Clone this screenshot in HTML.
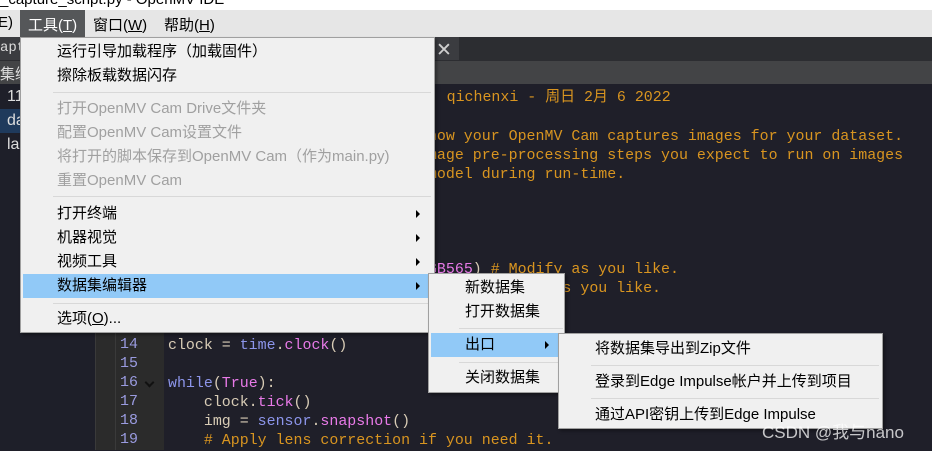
<!DOCTYPE html>
<html><head><meta charset="utf-8"><style>
*{margin:0;padding:0;box-sizing:border-box}
body{width:932px;height:450px;overflow:hidden;background:#1f1f29;position:relative;font-family:"Liberation Sans","Microsoft YaHei","Noto Sans CJK SC",sans-serif}
.a{position:absolute;white-space:pre}
.code{font-family:"Liberation Mono","Noto Sans CJK SC",monospace;font-size:14.95px;line-height:19px}
.o{color:#d99520}.d{color:#d8ccb6}.b{color:#8c95ea}.p{color:#e87ae8}.n{color:#9a9be0}
.menu{background:#f0f0f0;border:1px solid #a0a0a0;box-shadow:2px 2px 3px rgba(0,0,0,.35);font-size:15px;color:#000}
.it{position:absolute;white-space:nowrap;height:24px;line-height:24px}
.g{color:#a0a0a0}
.sep{position:absolute;height:1px;background:#d8d8d8}
.arr{position:absolute;width:0;height:0;border-left:4px solid #000;border-top:4px solid transparent;border-bottom:4px solid transparent}
.hl{position:absolute;background:#91c9f7}
</style></head><body>
<div class="a" style="left:0;top:0;width:932px;height:10px;background:#fff;overflow:hidden"><div class="a" style="left:0;top:-9px;font-size:15px;color:#000">_capture_script.py - OpenMV IDE</div></div>
<div class="a" style="left:0;top:10px;width:932px;height:27px;background:#e6e6e6;font-size:15px;color:#000">
<div class="a" style="left:-2px;top:4px">E)</div>
<div class="a" style="left:20px;top:0;width:65px;height:27px;background:#555759"></div>
<div class="a" style="left:28px;top:4px;color:#fff">工具(<u>T</u>)</div>
<div class="a" style="left:93px;top:4px">窗口(<u>W</u>)</div>
<div class="a" style="left:164px;top:4px">帮助(<u>H</u>)</div>
</div>
<div class="a" style="left:0;top:37px;width:932px;height:24px;background:#2c2d31"></div>
<div class="a" style="left:0;top:37px;width:459px;height:23px;background:#3b3c40"></div>
<div class="a" style="left:436px;top:39px;color:#cfcfcf;font-size:19px">✕</div>
<div class="a" style="left:0;top:40px;color:#ddd;font-size:14px;font-family:'Liberation Mono',monospace">apt</div>
<div class="a" style="left:0;top:61px;width:932px;height:23px;background:#434446"></div>
<div class="a" style="left:0;top:63px;color:#ddd;font-size:15px">集编</div>
<div class="a" style="left:0;top:84px;width:95px;height:366px;background:#1e1f29"></div>
<div class="a" style="left:0;top:109px;width:95px;height:24px;background:#1f3a5c"></div>
<div class="a" style="left:7px;top:88px;color:#ddd;font-size:16px">11</div>
<div class="a" style="left:7px;top:112px;color:#ddd;font-size:16px">da</div>
<div class="a" style="left:7px;top:136px;color:#ddd;font-size:16px">lal</div>
<div class="a" style="left:95px;top:84px;width:1px;height:366px;background:#3a3a3a"></div>
<div class="a" style="left:96px;top:84px;width:19px;height:366px;background:#2b2b2b"></div>
<div class="a" style="left:115px;top:84px;width:1px;height:366px;background:#3a3a3a"></div>
<div class="a" style="left:116px;top:84px;width:48px;height:366px;background:#2b2b2b"></div>
<div class="a code n" style="left:120px;top:336px">14
15
16
17
18
19</div>
<div class="a" style="left:146px;top:379px;width:7px;height:7px;border-right:2px solid #111;border-bottom:2px solid #111;transform:rotate(45deg)"></div>
<div class="a code o" style="left:348px;top:89px"># Author:  qichenxi - 周日 2月 6 2022</div>
<div class="a code o" style="left:168px;top:128px"># Use this script to control how your OpenMV Cam captures images for your dataset.</div>
<div class="a code o" style="left:168px;top:147px"># You should apply the same image pre-processing steps you expect to run on images</div>
<div class="a code o" style="left:168px;top:166px"># that you will feed to your model during run-time.</div>
<div class="a code" style="left:168px;top:261px"><span class="d">sensor.set_pixformat(sensor.</span><span class="p">RGB565</span><span class="d">)</span> <span class="o"># Modify as you like.</span></div>
<div class="a code" style="left:168px;top:280px"><span class="d">sensor.set_framesize(</span><span class="o">sensor.QVGA) # Modify as you like.</span></div>
<div class="a code" style="left:168px;top:337px"><span class="d">clock = </span><span class="b">time</span><span class="d">.</span><span class="p">clock</span><span class="d">()</span></div>
<div class="a code" style="left:168px;top:375px"><span class="b">while</span><span class="d">(</span><span class="p">True</span><span class="d">):</span></div>
<div class="a code" style="left:168px;top:394px"><span class="d">    clock.</span><span class="p">tick</span><span class="d">()</span></div>
<div class="a code" style="left:168px;top:413px"><span class="d">    img = </span><span class="b">sensor</span><span class="d">.</span><span class="p">snapshot</span><span class="d">()</span></div>
<div class="a code o" style="left:168px;top:432px">    # Apply lens correction if you need it.</div>
<div class="a menu" style="left:20px;top:37px;width:415px;height:296px">
<div class="it" style="left:36px;top:2px">运行引导加载程序（加载固件）</div>
<div class="it" style="left:36px;top:26px">擦除板载数据闪存</div>
<div class="sep" style="left:32px;top:54px;width:378px"></div>
<div class="it g" style="left:36px;top:59px">打开OpenMV Cam Drive文件夹</div>
<div class="it g" style="left:36px;top:83px">配置OpenMV Cam设置文件</div>
<div class="it g" style="left:36px;top:107px">将打开的脚本保存到OpenMV Cam（作为main.py)</div>
<div class="it g" style="left:36px;top:131px">重置OpenMV Cam</div>
<div class="sep" style="left:32px;top:158px;width:378px"></div>
<div class="it" style="left:36px;top:164px">打开终端</div><div class="arr" style="left:395px;top:172px"></div>
<div class="it" style="left:36px;top:188px">机器视觉</div><div class="arr" style="left:395px;top:196px"></div>
<div class="it" style="left:36px;top:212px">视频工具</div><div class="arr" style="left:395px;top:220px"></div>
<div class="hl" style="left:2px;top:236px;width:405px;height:24px"></div>
<div class="it" style="left:36px;top:236px">数据集编辑器</div><div class="arr" style="left:395px;top:244px"></div>
<div class="sep" style="left:32px;top:265px;width:378px"></div>
<div class="it" style="left:36px;top:269px">选项(<u>O</u>)...</div>
</div>
<div class="a menu" style="left:428px;top:273px;width:137px;height:120px">
<div class="it" style="left:36px;top:2px">新数据集</div>
<div class="it" style="left:36px;top:26px">打开数据集</div>
<div class="sep" style="left:30px;top:54px;width:104px"></div>
<div class="hl" style="left:2px;top:59px;width:127px;height:24px"></div>
<div class="it" style="left:36px;top:59px">出口</div><div class="arr" style="left:116px;top:67px"></div>
<div class="sep" style="left:30px;top:88px;width:104px"></div>
<div class="it" style="left:36px;top:92px">关闭数据集</div>
</div>
<div class="a menu" style="left:558px;top:333px;width:325px;height:96px">
<div class="it" style="left:36px;top:3px">将数据集导出到Zip文件</div>
<div class="sep" style="left:32px;top:31px;width:288px"></div>
<div class="it" style="left:36px;top:36px">登录到Edge Impulse帐户并上传到项目</div>
<div class="sep" style="left:32px;top:64px;width:288px"></div>
<div class="it" style="left:36px;top:69px">通过API密钥上传到Edge Impulse</div>
</div>
<div class="a" style="left:762px;top:418px;font-size:17px;color:rgba(255,255,255,.75)">CSDN @我与nano</div>
</body></html>
